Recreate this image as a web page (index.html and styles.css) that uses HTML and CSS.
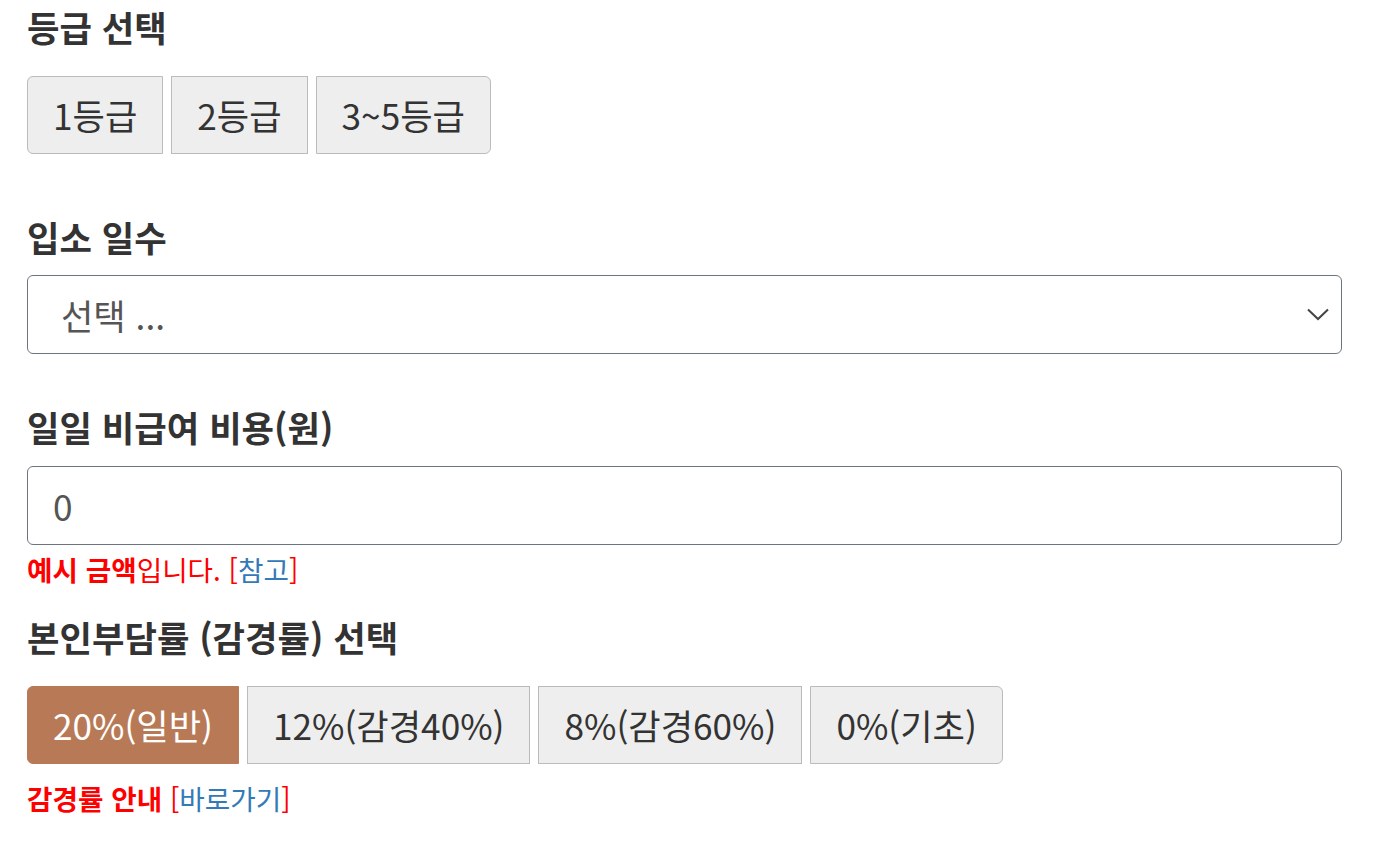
FILE: index.html
```html
<!DOCTYPE html>
<html lang="ko">
<head>
<meta charset="utf-8">
<link rel="stylesheet" href="styles.css">
</head>
<body>
<div class="form">
  <h2 class="label label-grade">등급 선택</h2>
  <div class="btn-group">
    <button class="btn">1등급</button>
    <button class="btn">2등급</button>
    <button class="btn">3~5등급</button>
  </div>

  <h2 class="label label-days">입소 일수</h2>
  <div class="select">
    <span class="select-text">선택 ...</span>
    <svg class="chevron" width="22" height="13" viewBox="0 0 22 13"><path d="M1 1.5 L11 11 L21 1.5" fill="none" stroke="#444" stroke-width="2"/></svg>
  </div>

  <h2 class="label label-cost">일일 비급여 비용(원)</h2>
  <div class="input"><span class="input-text">0</span></div>
  <p class="note note-cost"><b>예시 금액</b>입니다. [<span class="link">참고</span>]</p>

  <h2 class="label label-rate">본인부담률 (감경률) 선택</h2>
  <div class="btn-group">
    <button class="btn active">20%(일반)</button>
    <button class="btn">12%(감경40%)</button>
    <button class="btn">8%(감경60%)</button>
    <button class="btn">0%(기초)</button>
  </div>
  <p class="note note-rate"><b>감경률 안내</b> [<span class="link">바로가기</span>]</p>
</div>
</body>
</html>
```

FILE: styles.css
```css
html, body {
  margin: 0;
  padding: 0;
  background: #fff;
}
body {
  font-family: "Noto Sans CJK KR", "Noto Sans", sans-serif;
  color: #333;
}
.form {
  width: 1315px;
  margin-left: 27px;
  display: flex;
  flex-direction: column;
  align-items: flex-start;
}
.label {
  margin: 0;
  font-size: 35.3px;
  line-height: 52px;
  font-weight: 700;
  color: #333;
}
.label-grade { margin-top: 1px; margin-bottom: 23px; }
.label-days { margin-top: 57px; margin-bottom: 12px; }
.label-cost { margin-top: 47px; margin-bottom: 13px; }
.label-rate { margin-top: 21px; margin-bottom: 23px; }

.btn-group {
  display: flex;
  gap: 8px;
}
.btn {
  font-family: inherit;
  font-size: 35.2px;
  line-height: 52px;
  color: #333;
  background: #eee;
  border: 1px solid #bbb;
  border-radius: 0;
  padding: 12px 25px;
  margin: 0;
}
.btn:first-child { border-radius: 6px 0 0 6px; }
.btn:last-child { border-radius: 0 6px 6px 0; }
.btn.active {
  background: #b87a56;
  border-color: #b87a56;
  color: #fff;
}

.select, .input {
  box-sizing: border-box;
  width: 100%;
  height: 79px;
  border: 1px solid #6c757d;
  border-radius: 6px;
  display: flex;
  align-items: center;
  background: #fff;
}
.select { padding: 0 12px 0 33px; justify-content: space-between; }
.input { padding: 0 25px; }
.select-text, .input-text {
  font-size: 35.2px;
  line-height: 52px;
  color: #555;
}
.chevron { display: block; }

.note {
  margin: 0;
  font-size: 27.7px;
  line-height: 41px;
  color: #f00;
}
.note b { font-weight: 700; }
.link { color: #337ab7; }
.note-cost { margin-top: 4px; }
.note-rate { margin-top: 14px; }
```
